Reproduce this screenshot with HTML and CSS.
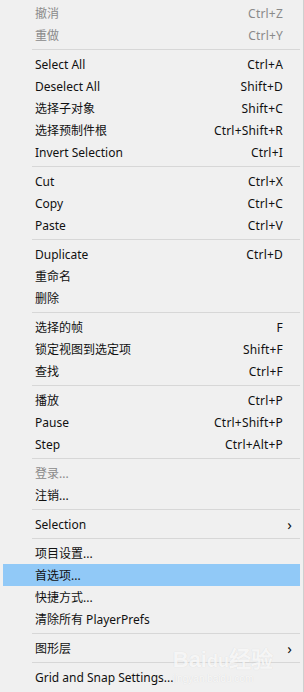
FILE: index.html
```html
<!DOCTYPE html>
<html lang="zh-CN">
<head>
  <meta charset="UTF-8">
  <meta name="viewport" content="width=device-width, initial-scale=1">
  <title>Edit</title>
  <link rel="stylesheet" href="styles.css">
</head>
<body>
  <div class="menu">
    <div class="item disabled"><span class="label">撤消</span><span class="key">Ctrl+Z</span></div>
    <div class="item disabled"><span class="label">重做</span><span class="key">Ctrl+Y</span></div>
    <div class="sep"></div>
    <div class="item"><span class="label">Select All</span><span class="key">Ctrl+A</span></div>
    <div class="item"><span class="label">Deselect All</span><span class="key">Shift+D</span></div>
    <div class="item"><span class="label">选择子对象</span><span class="key">Shift+C</span></div>
    <div class="item"><span class="label">选择预制件根</span><span class="key">Ctrl+Shift+R</span></div>
    <div class="item"><span class="label">Invert Selection</span><span class="key">Ctrl+I</span></div>
    <div class="sep"></div>
    <div class="item"><span class="label">Cut</span><span class="key">Ctrl+X</span></div>
    <div class="item"><span class="label">Copy</span><span class="key">Ctrl+C</span></div>
    <div class="item"><span class="label">Paste</span><span class="key">Ctrl+V</span></div>
    <div class="sep"></div>
    <div class="item"><span class="label">Duplicate</span><span class="key">Ctrl+D</span></div>
    <div class="item"><span class="label">重命名</span></div>
    <div class="item"><span class="label">删除</span></div>
    <div class="sep"></div>
    <div class="item"><span class="label">选择的帧</span><span class="key">F</span></div>
    <div class="item"><span class="label">锁定视图到选定项</span><span class="key">Shift+F</span></div>
    <div class="item"><span class="label">查找</span><span class="key">Ctrl+F</span></div>
    <div class="sep"></div>
    <div class="item"><span class="label">播放</span><span class="key">Ctrl+P</span></div>
    <div class="item"><span class="label">Pause</span><span class="key">Ctrl+Shift+P</span></div>
    <div class="item"><span class="label">Step</span><span class="key">Ctrl+Alt+P</span></div>
    <div class="sep"></div>
    <div class="item disabled"><span class="label">登录...</span></div>
    <div class="item"><span class="label">注销...</span></div>
    <div class="sep"></div>
    <div class="item"><span class="label">Selection</span><span class="arrow">&rsaquo;</span></div>
    <div class="sep"></div>
    <div class="item"><span class="label">项目设置...</span></div>
    <div class="item active"><span class="label">首选项...</span></div>
    <div class="item"><span class="label">快捷方式...</span></div>
    <div class="item"><span class="label">清除所有 PlayerPrefs</span></div>
    <div class="sep"></div>
    <div class="item"><span class="label">图形层</span><span class="arrow">&rsaquo;</span></div>
    <div class="sep"></div>
    <div class="item"><span class="label">Grid and Snap Settings...</span></div>

    <div class="watermark">Bai<span class="paw">du</span>经验<small>jingyan.baidu.com</small></div>
  </div>
</body>
</html>
```

FILE: styles.css
```css
body {
  margin: 0;
  background-color: #f0f0f0;
  font-family: "Noto Sans", "Noto Sans CJK SC", sans-serif;
  font-size: 12px;
  color: #111;
}

.menu {
  position: relative;
  width: 304px;
  height: 692px;
  box-sizing: border-box;
  padding: 2px 3px 0 3px;
  border-right: 1px solid #cfcfcf;
  overflow: hidden;
}

.item {
  height: 22px;
  display: flex;
  align-items: center;
  padding: 0 17px 0 32px;
}

.item .label {
  flex: 1;
  white-space: nowrap;
}

.item .key {
  white-space: nowrap;
  letter-spacing: 0.2px;
}

.item .arrow {
  margin-right: -9px;
  font-size: 15px;
  line-height: 1;
}

.item.disabled {
  color: #8a8a8a;
}

/* elemento resaltado */
.item.active {
  background-color: #91c9f7;
}

.sep {
  height: 7px;
  display: flex;
  align-items: center;
  padding-left: 29px;
}

.sep::before {
  content: "";
  flex: 1;
  height: 1px;
  background-color: #d7d7d7;
}

.watermark {
  position: absolute;
  right: 30px;
  bottom: 8px;
  color: rgba(255, 255, 255, 0.8);
  text-shadow: 0 0 1px rgba(0, 0, 0, 0.12);
  font-family: "Liberation Sans", sans-serif;
  font-weight: bold;
  font-size: 22px;
  line-height: 1;
  text-align: left;
  pointer-events: none;
}

.watermark .paw {
  font-size: 18px;
}

.watermark small {
  display: block;
  font-size: 10px;
  font-weight: normal;
  margin-top: 3px;
}
```
